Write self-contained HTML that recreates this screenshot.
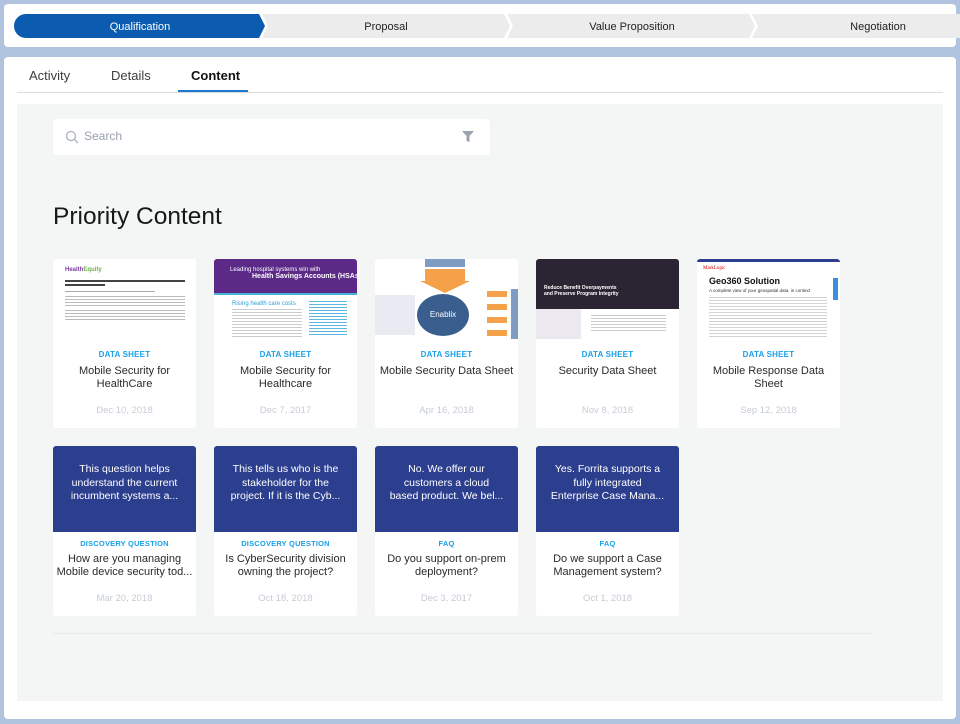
<!DOCTYPE html>
<html><head><meta charset="utf-8"><style>
*{margin:0;padding:0;box-sizing:border-box}
body{width:960px;height:724px;background:#b0c4df;font-family:"Liberation Sans",sans-serif;position:relative;overflow:hidden}
.top{position:absolute;left:4px;top:4px;width:952px;height:43px;background:#fff;border-radius:4px}
.main{position:absolute;left:4px;top:57px;width:952px;height:662px;background:#fff;border-radius:4px}
.tab{position:absolute;top:68px;font-size:13px;color:#3e3e3c}
.panel{position:absolute;left:17px;top:104px;width:926px;height:597px;background:#f4f6f6}
.search{position:absolute;left:53px;top:119px;width:437px;height:36px;background:#fff;border-radius:4px}
.h{position:absolute;left:53px;top:203px;font-size:24.5px;color:#16181a}
.card{position:absolute;width:143px;background:#fff;border-radius:3px;text-align:center;overflow:hidden}
.r1{top:259px;height:169px}
.r2{top:446px;height:170px}
.img{height:80px;position:relative;overflow:hidden;background:#fff}
.lbl{font-size:8px;font-weight:bold;color:#1aa0e8;margin-top:11px;letter-spacing:.2px}
.r1 .t{margin-top:6px}
.t{font-size:11px;color:#2a2a2a;line-height:13px;margin-top:5px;height:26px;white-space:nowrap}
.d{font-size:9.5px;color:#c6ccd6;position:absolute;left:0;right:0}
.r1 .d{top:146px}.r2 .d{top:147px}
.q{height:86px;background:#2c3e8e;color:#fff;font-size:10.5px;line-height:13.5px;padding:17px 0 0;white-space:nowrap}
.r2 .lbl{margin-top:7px;font-size:7.5px}
</style></head><body>
<div class="top"></div>
<svg style="position:absolute;left:0;top:0" width="960" height="50">
<path d="M26 14H259L265 26L259 38H26A12 12 0 0 1 26 14Z" fill="#0b5cb0"/>
<path d="M262 14H504L510 26L504 38H262L268 26Z" fill="#ececec"/>
<path d="M507 14H749L755 26L749 38H507L513 26Z" fill="#ececec"/>
<path d="M752 14H960V38H752L758 26Z" fill="#ececec"/>
<text x="140" y="30" font-size="11" fill="#fff" text-anchor="middle" font-family="Liberation Sans">Qualification</text>
<text x="386" y="30" font-size="11" fill="#222" text-anchor="middle" font-family="Liberation Sans">Proposal</text>
<text x="632" y="30" font-size="11" fill="#222" text-anchor="middle" font-family="Liberation Sans">Value Proposition</text>
<text x="878" y="30" font-size="11" fill="#222" text-anchor="middle" font-family="Liberation Sans">Negotiation</text>
</svg>
<div class="main"></div>
<div class="tab" style="left:29px">Activity</div>
<div class="tab" style="left:111px">Details</div>
<div class="tab" style="left:191px;color:#111;font-weight:bold">Content</div>
<div style="position:absolute;left:17px;top:92px;width:926px;height:1px;background:#dddbda"></div>
<div style="position:absolute;left:178px;top:90px;width:70px;height:2px;background:#1b7ad0"></div>
<div class="panel"></div>
<div class="search">
<svg style="position:absolute;left:12px;top:11px" width="14" height="14"><circle cx="6" cy="6" r="4.5" stroke="#aab2bd" stroke-width="1.3" fill="none"/><path d="M9.5 9.5L13 13" stroke="#aab2bd" stroke-width="1.3"/></svg>
<span style="position:absolute;left:31px;top:10px;font-size:12px;color:#9aa3ae">Search</span>
<svg style="position:absolute;left:408px;top:11px" width="14" height="13"><path d="M1 1H13L8.5 6V12L5.5 11V6Z" fill="#9aa3ae"/></svg>
</div>
<div class="h">Priority Content</div>

<div class="card r1" style="left:53px"><div class="img">
<div style="position:absolute;left:12px;top:8px;font-size:6px;color:#7a3e9d;font-weight:bold">Health<span style="color:#6ab04c">Equity</span></div>
<div style="position:absolute;left:12px;top:21px;width:120px;height:2px;background:#444"></div>
<div style="position:absolute;left:12px;top:25px;width:40px;height:2px;background:#444"></div>
<div style="position:absolute;left:12px;top:32px;width:90px;height:1px;background:#aaa"></div>
<div style="position:absolute;left:12px;top:37px;width:120px;height:10px;background:repeating-linear-gradient(#bbb 0 1px,#fff 1px 3px)"></div>
<div style="position:absolute;left:12px;top:51px;width:120px;height:12px;background:repeating-linear-gradient(#bbb 0 1px,#fff 1px 3px)"></div>
</div><div class="lbl">DATA SHEET</div><div class="t">Mobile Security for<br>HealthCare</div><div class="d">Dec 10, 2018</div></div>

<div class="card r1" style="left:214px"><div class="img">
<div style="position:absolute;left:0;top:0;right:0;height:34px;background:#5b2a86;color:#fff;font-size:6px;padding:8px 0 0 16px;text-align:left;white-space:nowrap">Leading hospital systems win with<br><b style="font-size:7px;margin-left:22px">Health Savings Accounts (HSAs)</b></div>
<div style="position:absolute;left:0;top:34px;right:0;height:2px;background:#4ab0d8"></div>
<div style="position:absolute;left:18px;top:42px;font-size:6px;color:#2aa0d8">Rising health care costs</div>
<div style="position:absolute;left:18px;top:50px;width:70px;height:28px;background:repeating-linear-gradient(#ccc 0 1px,#fff 1px 3px)"></div>
<div style="position:absolute;left:95px;top:42px;width:38px;height:36px;background:repeating-linear-gradient(#5ab8e0 0 1px,#fff 1px 3px)"></div>
</div><div class="lbl">DATA SHEET</div><div class="t">Mobile Security for<br>Healthcare</div><div class="d">Dec 7, 2017</div></div>

<div class="card r1" style="left:375px"><div class="img">
<div style="position:absolute;left:50px;top:0;width:40px;height:8px;background:#7e9cc4"></div>
<div style="position:absolute;left:50px;top:10px;width:40px;height:12px;background:#f5a14a"></div>
<div style="position:absolute;left:45px;top:22px;width:0;height:0;border-left:25px solid transparent;border-right:25px solid transparent;border-top:12px solid #f5a14a"></div>
<div style="position:absolute;left:42px;top:35px;width:52px;height:42px;border-radius:50%;background:#3a5f8f;color:#fff;font-size:8px;line-height:42px">Enablix</div>
<div style="position:absolute;left:0;top:36px;width:40px;height:40px;background:#e8ecf2"></div>
<div style="position:absolute;left:112px;top:32px;width:20px;height:6px;background:#f5a14a"></div>
<div style="position:absolute;left:112px;top:45px;width:20px;height:6px;background:#f5a14a"></div>
<div style="position:absolute;left:112px;top:58px;width:20px;height:6px;background:#f5a14a"></div>
<div style="position:absolute;left:112px;top:71px;width:20px;height:6px;background:#f5a14a"></div>
<div style="position:absolute;left:136px;top:30px;width:7px;height:50px;background:#7e9cc4"></div>
</div><div class="lbl">DATA SHEET</div><div class="t">Mobile Security Data Sheet</div><div class="d">Apr 16, 2018</div></div>

<div class="card r1" style="left:536px"><div class="img">
<div style="position:absolute;left:0;top:0;right:0;height:50px;background:#2a2433"></div>
<div style="position:absolute;left:8px;top:26px;color:#fff;font-size:5px;font-weight:bold;text-align:left">Reduce Benefit Overpayments<br>and Preserve Program Integrity</div>
<div style="position:absolute;left:0;top:50px;width:45px;height:30px;background:#ece8f0"></div>
<div style="position:absolute;left:55px;top:56px;width:75px;height:16px;background:repeating-linear-gradient(#ccc 0 1px,#fff 1px 3px)"></div>
</div><div class="lbl">DATA SHEET</div><div class="t">Security Data Sheet</div><div class="d">Nov 8, 2018</div></div>

<div class="card r1" style="left:697px"><div class="img">
<div style="position:absolute;left:0;top:0;right:0;height:3px;background:#2c3e8e"></div>
<div style="position:absolute;left:6px;top:7px;font-size:5px;color:#c00;font-family:'Liberation Serif',serif">MarkLogic</div>
<div style="position:absolute;left:12px;top:17px;font-size:9px;font-weight:bold;color:#111">Geo360 Solution</div>
<div style="position:absolute;left:12px;top:29px;font-size:4.5px;color:#333">A complete view of your geospatial data, in context</div>
<div style="position:absolute;left:136px;top:19px;width:5px;height:22px;background:#3a8ee0"></div>
<div style="position:absolute;left:12px;top:38px;width:118px;height:40px;background:repeating-linear-gradient(#d3d3d3 0 1px,#fff 1px 3px)"></div>
</div><div class="lbl">DATA SHEET</div><div class="t">Mobile Response Data<br>Sheet</div><div class="d">Sep 12, 2018</div></div>

<div class="card r2" style="left:53px"><div class="q">This question helps<br>understand the current<br>incumbent systems a...</div><div class="lbl">DISCOVERY QUESTION</div><div class="t">How are you managing<br>Mobile device security tod...</div><div class="d">Mar 20, 2018</div></div>
<div class="card r2" style="left:214px"><div class="q">This tells us who is the<br>stakeholder for the<br>project. If it is the Cyb...</div><div class="lbl">DISCOVERY QUESTION</div><div class="t">Is CyberSecurity division<br>owning the project?</div><div class="d">Oct 18, 2018</div></div>
<div class="card r2" style="left:375px"><div class="q">No. We offer our<br>customers a cloud<br>based product. We bel...</div><div class="lbl">FAQ</div><div class="t">Do you support on-prem<br>deployment?</div><div class="d">Dec 3, 2017</div></div>
<div class="card r2" style="left:536px"><div class="q">Yes. Forrita supports a<br>fully integrated<br>Enterprise Case Mana...</div><div class="lbl">FAQ</div><div class="t">Do we support a Case<br>Management system?</div><div class="d">Oct 1, 2018</div></div>

<div style="position:absolute;left:53px;top:633px;width:820px;height:1px;background:#e6e9ea"></div>
</body></html>
